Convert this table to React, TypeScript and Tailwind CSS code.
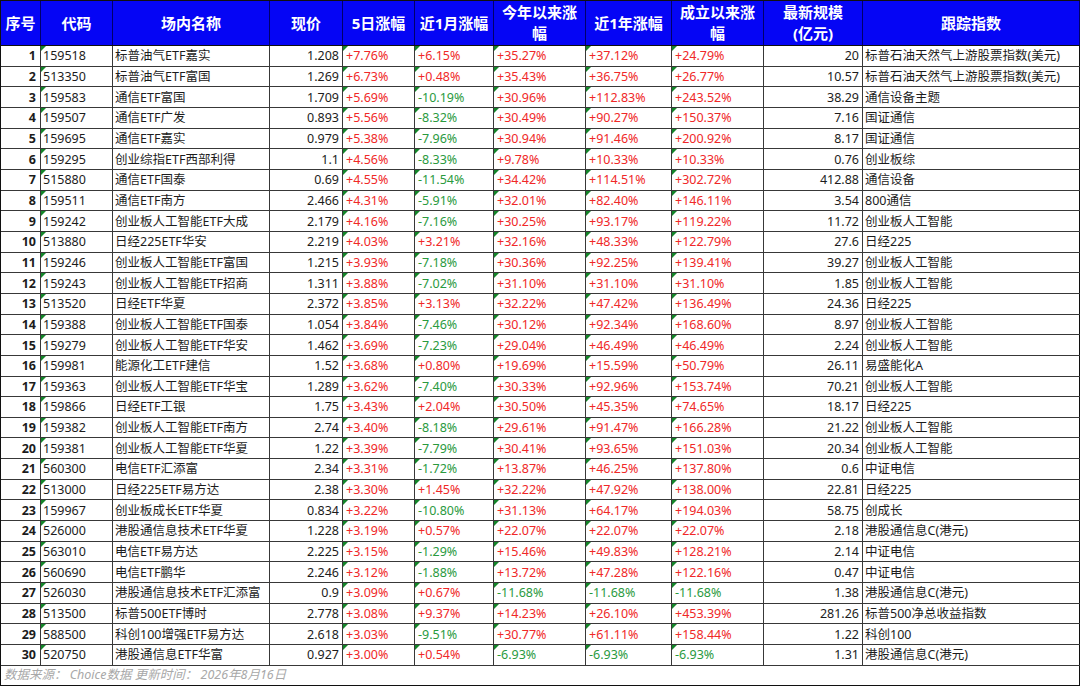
import React from "react";

type Row = [number, string, string, string, string, string, string, string, string, string, string];

const rows: Row[] = [
  [1, "159518", "标普油气ETF嘉实", "1.208", "+7.76%", "+6.15%", "+35.27%", "+37.12%", "+24.79%", "20", "标普石油天然气上游股票指数(美元)"],
  [2, "513350", "标普油气ETF富国", "1.269", "+6.73%", "+0.48%", "+35.43%", "+36.75%", "+26.77%", "10.57", "标普石油天然气上游股票指数(美元)"],
  [3, "159583", "通信ETF富国", "1.709", "+5.69%", "-10.19%", "+30.96%", "+112.83%", "+243.52%", "38.29", "通信设备主题"],
  [4, "159507", "通信ETF广发", "0.893", "+5.56%", "-8.32%", "+30.49%", "+90.27%", "+150.37%", "7.16", "国证通信"],
  [5, "159695", "通信ETF嘉实", "0.979", "+5.38%", "-7.96%", "+30.94%", "+91.46%", "+200.92%", "8.17", "国证通信"],
  [6, "159295", "创业综指ETF西部利得", "1.1", "+4.56%", "-8.33%", "+9.78%", "+10.33%", "+10.33%", "0.76", "创业板综"],
  [7, "515880", "通信ETF国泰", "0.69", "+4.55%", "-11.54%", "+34.42%", "+114.51%", "+302.72%", "412.88", "通信设备"],
  [8, "159511", "通信ETF南方", "2.466", "+4.31%", "-5.91%", "+32.01%", "+82.40%", "+146.11%", "3.54", "800通信"],
  [9, "159242", "创业板人工智能ETF大成", "2.179", "+4.16%", "-7.16%", "+30.25%", "+93.17%", "+119.22%", "11.72", "创业板人工智能"],
  [10, "513880", "日经225ETF华安", "2.219", "+4.03%", "+3.21%", "+32.16%", "+48.33%", "+122.79%", "27.6", "日经225"],
  [11, "159246", "创业板人工智能ETF富国", "1.215", "+3.93%", "-7.18%", "+30.36%", "+92.25%", "+139.41%", "39.27", "创业板人工智能"],
  [12, "159243", "创业板人工智能ETF招商", "1.311", "+3.88%", "-7.02%", "+31.10%", "+31.10%", "+31.10%", "1.85", "创业板人工智能"],
  [13, "513520", "日经ETF华夏", "2.372", "+3.85%", "+3.13%", "+32.22%", "+47.42%", "+136.49%", "24.36", "日经225"],
  [14, "159388", "创业板人工智能ETF国泰", "1.054", "+3.84%", "-7.46%", "+30.12%", "+92.34%", "+168.60%", "8.97", "创业板人工智能"],
  [15, "159279", "创业板人工智能ETF华安", "1.462", "+3.69%", "-7.23%", "+29.04%", "+46.49%", "+46.49%", "2.24", "创业板人工智能"],
  [16, "159981", "能源化工ETF建信", "1.52", "+3.68%", "+0.80%", "+19.69%", "+15.59%", "+50.79%", "26.11", "易盛能化A"],
  [17, "159363", "创业板人工智能ETF华宝", "1.289", "+3.62%", "-7.40%", "+30.33%", "+92.96%", "+153.74%", "70.21", "创业板人工智能"],
  [18, "159866", "日经ETF工银", "1.75", "+3.43%", "+2.04%", "+30.50%", "+45.35%", "+74.65%", "18.17", "日经225"],
  [19, "159382", "创业板人工智能ETF南方", "2.74", "+3.40%", "-8.18%", "+29.61%", "+91.47%", "+166.28%", "21.22", "创业板人工智能"],
  [20, "159381", "创业板人工智能ETF华夏", "1.22", "+3.39%", "-7.79%", "+30.41%", "+93.65%", "+151.03%", "20.34", "创业板人工智能"],
  [21, "560300", "电信ETF汇添富", "2.34", "+3.31%", "-1.72%", "+13.87%", "+46.25%", "+137.80%", "0.6", "中证电信"],
  [22, "513000", "日经225ETF易方达", "2.38", "+3.30%", "+1.45%", "+32.22%", "+47.92%", "+138.00%", "22.81", "日经225"],
  [23, "159967", "创业板成长ETF华夏", "0.834", "+3.22%", "-10.80%", "+31.13%", "+64.17%", "+194.03%", "58.75", "创成长"],
  [24, "526000", "港股通信息技术ETF华夏", "1.228", "+3.19%", "+0.57%", "+22.07%", "+22.07%", "+22.07%", "2.18", "港股通信息C(港元)"],
  [25, "563010", "电信ETF易方达", "2.225", "+3.15%", "-1.29%", "+15.46%", "+49.83%", "+128.21%", "2.14", "中证电信"],
  [26, "560690", "电信ETF鹏华", "2.246", "+3.12%", "-1.88%", "+13.72%", "+47.28%", "+122.16%", "0.47", "中证电信"],
  [27, "526030", "港股通信息技术ETF汇添富", "0.9", "+3.09%", "+0.67%", "-11.68%", "-11.68%", "-11.68%", "1.38", "港股通信息C(港元)"],
  [28, "513500", "标普500ETF博时", "2.778", "+3.08%", "+9.37%", "+14.23%", "+26.10%", "+453.39%", "281.26", "标普500净总收益指数"],
  [29, "588500", "科创100增强ETF易方达", "2.618", "+3.03%", "-9.51%", "+30.77%", "+61.11%", "+158.44%", "1.22", "科创100"],
  [30, "520750", "港股通信息ETF华富", "0.927", "+3.00%", "+0.54%", "-6.93%", "-6.93%", "-6.93%", "1.31", "港股通信息C(港元)"],
];

const cols = "grid grid-cols-[40px_72px_157px_73px_72px_79px_92px_86px_92px_99px_217px]";

// Excel's little "number stored as text" flag in the cell corner
function Flag() {
  return (
    <span className="absolute left-0 top-0 h-0 w-0 border-r-[5px] border-t-[5px] border-r-transparent border-t-[#14852a]" />
  );
}

function Pct({ v }: { v: string }) {
  return (
    <div className="relative flex items-center border-r border-[#383838] pl-[3px]">
      <Flag />
      <span className={v.startsWith("-") ? "text-[#2a9a3e]" : "text-[#f02828]"}>{v}</span>
    </div>
  );
}

export default function App() {
  return (
    <div className="w-[1080px] bg-white font-['Noto_Sans','Noto_Sans_CJK_SC',sans-serif] text-[12.5px] text-[#1c1c1c]">
      <div className="border-l border-t border-[#101010]">
        <div className={`${cols} h-[45px] border-b border-[#101010] bg-[#0505f5] text-[15px] font-bold leading-[21px] text-white`}>
          {["序号", "代码", "场内名称", "现价", "5日涨幅", "近1月涨幅", "今年以来涨幅", "近1年涨幅", "成立以来涨幅", "最新规模(亿元)", "跟踪指数"].map(
            (h) => (
              <div key={h} className="flex items-center justify-center border-r border-[#00006a] px-1 text-center">
                {h === "最新规模(亿元)" ? (
                  <span>
                    最新规模
                    <br />
                    (亿元)
                  </span>
                ) : h.length >= 6 ? (
                  <span>
                    {h.slice(0, 5)}
                    <br />
                    {h.slice(5)}
                  </span>
                ) : (
                  h
                )}
              </div>
            )
          )}
        </div>

        {rows.map((r) => (
          <div key={r[0]} className={`${cols} h-[20.67px] border-b border-[#383838] leading-[19px]`}>
            <div className="flex items-center justify-end border-r border-[#383838] pr-[4px] font-bold">{r[0]}</div>
            <div className="relative flex items-center border-r border-[#383838] pl-[2px]">
              <Flag />
              {r[1]}
            </div>
            <div className="flex items-center overflow-hidden whitespace-nowrap border-r border-[#383838] pl-[2px]">{r[2]}</div>
            <div className="flex items-center justify-end border-r border-[#383838] pr-[3px]">{r[3]}</div>
            <Pct v={r[4]} />
            <Pct v={r[5]} />
            <Pct v={r[6]} />
            <Pct v={r[7]} />
            <Pct v={r[8]} />
            <div className="flex items-center justify-end border-r border-[#383838] pr-[3px]">{r[9]}</div>
            <div className="flex items-center overflow-hidden whitespace-nowrap border-r border-[#101010] pl-[2px]">{r[10]}</div>
          </div>
        ))}

        <div className="flex h-[20px] items-center border-b border-r border-[#101010] pl-[3px] text-[12.5px] italic text-[#a8a8a8]">
          数据来源： Choice数据 更新时间： 2026年8月16日
        </div>
      </div>
    </div>
  );
}
